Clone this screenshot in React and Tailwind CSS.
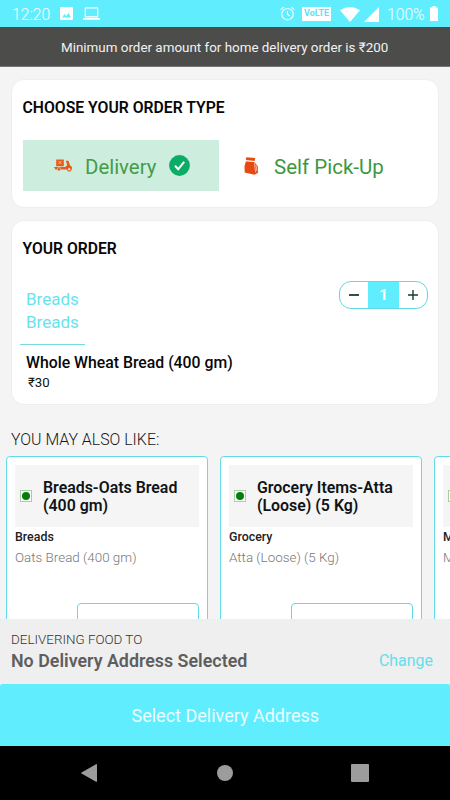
import React from "react";

// A single line of text in a box of fixed width and height.
function T({ w, size, weight = 400, fill, h = 20, className = "", children }) {
  return (
    <span
      className={"block whitespace-nowrap " + className}
      style={{ fontSize: size, fontWeight: weight, color: fill, height: h, lineHeight: h + "px", width: w }}
    >
      {children}
    </span>
  );
}

function StatusBar() {
  return (
    <header className="flex h-[27px] shrink-0 items-center bg-[#60eeff] pl-3 pr-3 text-white">
      <span className="mt-[2px] w-[48px] whitespace-nowrap text-[15.7px] leading-[25px] font-light">12:20</span>
      <svg className="h-[13px] w-[13px]" viewBox="0 0 13 13">
        <path
          fillRule="evenodd"
          fill="#fff"
          d="M1.3 0h10.4Q13 0 13 1.3v10.4q0 1.3-1.3 1.3H1.3Q0 13 0 11.7V1.3Q0 0 1.3 0ZM2 10.5h9L8.6 6 6.2 8.9 4.5 7Z"
        />
      </svg>
      <svg className="ml-[10px] h-[13px] w-[17px]" viewBox="0 0 17 13" fill="none" stroke="#fff">
        <rect x="2.3" y="0.8" width="12.4" height="9" rx="0.6" strokeWidth="1.2" />
        <path d="M0 11.9h17" strokeWidth="1.8" />
      </svg>
      <svg className="ml-auto h-[15px] w-[15px]" viewBox="0 0 15 15" fill="none" stroke="#fff" strokeWidth="1.1">
        <circle cx="7.5" cy="8.2" r="5.7" />
        <path d="M7.5 5v3.5l2.5 1.5M.7 3.7 3.7 1.2M14.3 3.7l-3-2.5" />
      </svg>
      <span className="ml-[7px] mt-[1px] flex h-[14px] w-[29px] items-center justify-center bg-white text-[9px] font-bold tracking-[-0.1px] text-[#60dff0]">
        VoLTE
      </span>
      <svg className="ml-[9px] mt-[1px] h-[15px] w-[20px]" viewBox="0 0 20 15">
        <path fill="#fff" d="M10 15 0 3.2Q10-3.2 20 3.2Z" />
      </svg>
      <svg className="ml-[4px] mt-[1px] h-[15px] w-[15px]" viewBox="0 0 15 15">
        <path fill="#fff" d="M15 0v15H0Z" />
      </svg>
      <span className="ml-[8px] mt-[2px] w-[39px] whitespace-nowrap text-[15.7px] leading-[25px] font-light">100%</span>
      <svg className="ml-[4px] h-[15px] w-[8px]" viewBox="0 0 8 15">
        <path fill="#fff" d="M2.4 0h3.2v1.6H8V15H0V1.6h2.4Z" />
      </svg>
    </header>
  );
}

function Scooter() {
  return (
    <svg className="h-[13px] w-[18px] shrink-0" viewBox="0 0 18 13">
      <path fill="#e85a1c" d="M2.2.5h7.6v6.7H2.2zM0 8.1h11.3L13.2 6 12 2.6V1.8h2.5l1.4 4.2 2 2v2.4H1.5Z" />
      <path stroke="#f4cdb0" strokeWidth=".8" fill="none" d="m4.4 2 3 3m0-3-3 3" />
      <circle cx="5" cy="10.2" r="1.7" fill="#e85a1c" stroke="#cdeedf" strokeWidth=".5" />
      <circle cx="15.2" cy="10.3" r="1.8" fill="#cdeedf" stroke="#e85a1c" strokeWidth="1.1" />
    </svg>
  );
}

function Bag() {
  return (
    <svg className="h-[18px] w-[15px] shrink-0" viewBox="0 0 15 18">
      <path fill="#e64a11" d="m2.2.3 9 .8-.6 3-8.6-.8ZM2 4.2l8.5.7 3.3 4.4.3 6.4-3.6 2L.7 15.5.5 9Z" />
      <path fill="none" stroke="#fff" strokeWidth=".6" d="m2 3.7 8.8.8M10.6 5.4l.3 5 .9 5M12 8l1 6" />
    </svg>
  );
}

function OrderType() {
  return (
    <section className="mx-[11px] mt-[12px] h-[129px] shrink-0 rounded-[13px] border border-[#eeeeee] bg-white px-[11px] pt-[18px]">
      <T w={210} size={15.75} weight={600} fill="#080808" className="-ml-[0.5px]">CHOOSE YOUR ORDER TYPE</T>
      <div className="mt-[22px] flex h-[51px]">
        <div className="flex w-[196px] items-center bg-[#cdeedf] pl-[31px]">
          <Scooter />
          <T w={72} size={20.4} fill="#459b49" h={24} className="ml-[13px] mt-[2px]">Delivery</T>
          <svg className="ml-[12px] h-[21px] w-[21px]" viewBox="0 0 21 21">
            <circle cx="10.5" cy="10.5" r="10.4" fill="#0bac65" />
            <path d="m6 10.8 3.2 3.4 6-7.3" fill="none" stroke="#fff" strokeWidth="2" />
          </svg>
        </div>
        <div className="flex items-center pl-[25px]">
          <Bag />
          <T w={112} size={20.5} fill="#3b983f" h={24} className="ml-[15px] mt-[2px]">Self Pick-Up</T>
        </div>
      </div>
    </section>
  );
}

function Stepper() {
  return (
    <div className="flex h-[28px] w-[89px] overflow-hidden rounded-[12px] border border-[#62d8e2]">
      <button className="flex w-[28px] items-center justify-center" aria-label="Remove one">
        <span className="block h-[1.5px] w-[10px] bg-[#35504a]" />
      </button>
      <span className="flex w-[31px] items-center justify-center bg-[#60eeff] pt-[1px] text-[15px] font-bold text-white">1</span>
      <button className="flex w-[28px] items-center justify-center" aria-label="Add one">
        <svg className="h-[10px] w-[10px]" viewBox="0 0 10 10" stroke="#143d34" strokeWidth="1.4">
          <path d="M0 5h10M5 0v10" />
        </svg>
      </button>
    </div>
  );
}

function YourOrder() {
  return (
    <section className="mx-[11px] mt-[12px] h-[185px] shrink-0 rounded-[13px] border border-[#eeeeee] bg-white pl-[11px] pr-[10px] pt-[18px]">
      <T w={100} size={15.7} weight={600} fill="#080808" className="-ml-[0.5px]">YOUR ORDER</T>
      <div className="mt-[22px] flex items-start justify-between">
        <div className="-ml-[3px] w-[65px] border-b border-[#78d9df] pb-[10px] pl-[6px] pt-[7px]">
          <T w={54} size={17} fill="#67e3ee" h={23}>Breads</T>
          <T w={54} size={17} fill="#67e3ee" h={23}>Breads</T>
        </div>
        <Stepper />
      </div>
      <T w={210} size={15.8} weight={500} fill="#080808" className="ml-[3px] mt-[8px]">Whole Wheat Bread (400 gm)</T>
      <T w={30} size={13.2} fill="#111111" className="ml-[5px]">₹30</T>
    </section>
  );
}

function VegMark() {
  return (
    <span className="flex h-[12px] w-[12px] shrink-0 items-center justify-center border border-[#a5cfa5] bg-white">
      <span className="block h-[8px] w-[8px] rounded-full bg-[#067d0b]" />
    </span>
  );
}

function Suggestion({ lines, category, item }) {
  return (
    <article className="h-[200px] w-[202px] shrink-0 rounded-[4px] border border-[#62dbe5] bg-white px-[8px] pt-[8px]">
      <div className="flex h-[62px] items-center bg-[#f5f5f5] pl-[5px]">
        <VegMark />
        <div className="ml-[11px] mt-[2px]">
          {lines.map((l) => (
            <T key={l} w={135} size={15.9} weight={600} fill="#101416" h={18}>{l}</T>
          ))}
        </div>
      </div>
      <T w={100} size={12.4} weight={500} fill="#222222" h={18} className="mt-[1px]">{category}</T>
      <T w={160} size={13.4} weight={300} fill="#777777" h={20} className="mt-[2px]">{item}</T>
      <div className="ml-auto mt-[35px] h-[40px] w-[122px] rounded-[4px] border border-[#62dbe5]" />
    </article>
  );
}

const suggestions = [
  { lines: ["Breads-Oats Bread", "(400 gm)"], category: "Breads", item: "Oats Bread (400 gm)" },
  { lines: ["Grocery Items-Atta", "(Loose) (5 Kg)"], category: "Grocery", item: "Atta (Loose) (5 Kg)" },
  { lines: [], category: "M", item: "M" },
];

function AddressBar() {
  return (
    <section className="h-[65px] shrink-0 bg-[#efefef] pl-[11px] pr-[17px] pt-[11px]">
      <T w={140} size={13.4} weight={300} fill="#333333">DELIVERING FOOD TO</T>
      <div className="flex items-center justify-between">
        <T w={240} size={17.85} weight={600} fill="#5e5e5e" h={22}>No Delivery Address Selected</T>
        <T w={54} size={15.9} fill="#64deec" h={22}>Change</T>
      </div>
    </section>
  );
}

export default function App() {
  return (
    <main className="flex h-[800px] w-[450px] flex-col overflow-hidden bg-[#f4f4f4] font-['Roboto',sans-serif]">
      <StatusBar />
      <div className="flex h-[40px] shrink-0 items-center justify-center border-b border-[#777777] bg-[#4c4c4a] pt-[2px]">
        <T w={328} size={13.4} fill="#f2f2f2">Minimum order amount for home delivery order is ₹200</T>
      </div>
      <OrderType />
      <YourOrder />
      <T w={150} size={15.9} weight={300} fill="#161616" className="ml-[11px] mt-[25px] shrink-0">YOU MAY ALSO LIKE:</T>
      <div className="mt-[6px] flex min-h-0 flex-1 items-start gap-[12px] overflow-hidden pl-[6px]">
        {suggestions.map((s) => (
          <Suggestion key={s.category} {...s} />
        ))}
      </div>
      <AddressBar />
      <button className="flex h-[62px] shrink-0 items-center justify-center rounded-t-[2px] bg-[#60eeff] pt-[2px]">
        <T w={187} size={18} fill="#ecfdff" h={24}>Select Delivery Address</T>
      </button>
      <nav className="flex h-[54px] shrink-0 items-center justify-between bg-black pl-[81px] pr-[81px]">
        <svg className="h-[18px] w-[16px]" viewBox="0 0 16 18">
          <path fill="#9c9c9c" d="M15 .2q1-.4 1 .7v16.2q0 1.1-1 .7L.6 9.6Q-.3 9 .6 8.4Z" />
        </svg>
        <span className="ml-[2px] h-[16px] w-[16px] rounded-full bg-[#9c9c9c]" />
        <span className="h-[18px] w-[18px] rounded-[1px] bg-[#9c9c9c]" />
      </nav>
    </main>
  );
}
